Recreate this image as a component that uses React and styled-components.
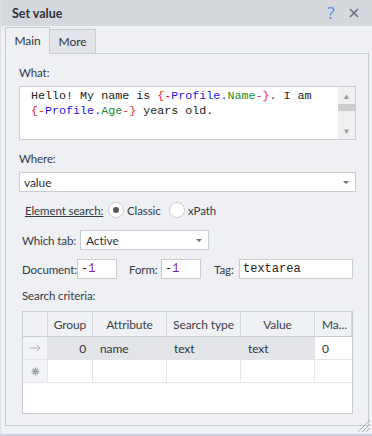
import React from 'react'
import styled, { createGlobalStyle } from 'styled-components'

const Global = createGlobalStyle`
  html, body {
    margin: 0;
    padding: 0;
    background: #eff0f4;
  }
  body {
    font-family: Lato, Roboto, sans-serif;
    font-size: 11.5px;
    letter-spacing: -0.1px;
    color: #333a44;
  }
`

const Window = styled.div`
  width: 372px;
  height: 436px;
  display: flex;
  flex-direction: column;
  background: #eff0f4;
  box-sizing: border-box;
  border-left: 1px solid #dcdfe4;
  border-bottom: 2px solid #d0d3d9;
  position: relative;
  overflow: hidden;
`

const TitleBar = styled.div`
  height: 26px;
  flex: none;
  background: #d5d8dd;
  display: flex;
  align-items: center;
  padding: 0 8px 0 11px;
  box-sizing: border-box;
`

const Title = styled.div`
  font-weight: bold;
  font-size: 12.5px;
  letter-spacing: 0;
  color: #2c313a;
  flex: 1;
`

const HelpButton = styled.span`
  width: 22px;
  text-align: center;
  font-family: "Noto Sans", sans-serif;
  font-size: 17px;
  color: #5b93ee;
  line-height: 20px;
  margin-right: 2px;
`

const CloseIcon = styled.svg`
  margin: 0 4px;
`

const Body = styled.div`
  flex: 1;
  display: flex;
  flex-direction: column;
  padding: 2px 3px 8px 4px;
`

const TabStrip = styled.div`
  display: flex;
  align-items: flex-end;
  height: 26px;
  margin-bottom: -1px;
  position: relative;
  z-index: 1;
`

const Tab = styled.div`
  box-sizing: border-box;
  height: ${p => (p.$active ? '27px' : '25px')};
  width: ${p => (p.$active ? '45px' : '46px')};
  border: 1px solid #c8cbd1;
  border-bottom: ${p => (p.$active ? '1px solid #eff0f4' : '1px solid #c8cbd1')};
  border-left: ${p => (p.$active ? '1px solid #c8cbd1' : 'none')};
  background: ${p => (p.$active ? '#eff0f4' : '#e3e5ea')};
  display: flex;
  align-items: center;
  justify-content: center;
  padding-bottom: ${p => (p.$active ? '1px' : '0')};
  font-size: 12px;
  color: #2f3540;
`

const Panel = styled.div`
  flex: 1;
  border: 1px solid #c8cbd1;
  padding: 11px 12px 10px 13px;
  display: flex;
  flex-direction: column;
`

const Label = styled.div`
  line-height: 16px;
  height: 16px;
  margin-top: ${p => p.$mt || 0}px;
  margin-left: ${p => p.$ml || 0}px;
`

const CodeBox = styled.div`
  margin-top: 5px;
  height: 54px;
  box-sizing: border-box;
  border: 1px solid #c9ccd2;
  background: #fff;
  display: flex;
`

const CodeText = styled.div`
  flex: 1;
  padding: 2px 0 0 11px;
  font-family: "Liberation Mono", "Courier New", monospace;
  font-size: 11.7px;
  letter-spacing: 0;
  line-height: 15px;
  color: #222;
  white-space: pre;
`

const Tok = styled.span`
  color: ${p => p.$c};
`

const ScrollBar = styled.div`
  width: 17px;
  background: #f0f0f0;
  display: flex;
  flex-direction: column;
  align-items: center;
`

const ScrollArrow = styled.div`
  height: 17px;
  width: 17px;
  display: flex;
  align-items: center;
  justify-content: center;
  color: #9a9a9a;
  font-size: 8px;
`

const ScrollThumb = styled.div`
  width: 17px;
  height: 7px;
  background: #cdcdcd;
`

const Spacer = styled.div`
  flex: 1;
`

const Select = styled.div`
  box-sizing: border-box;
  margin-top: ${p => p.$mt || 0}px;
  width: ${p => (p.$w ? `${p.$w}px` : 'auto')};
  height: 20px;
  border: 1px solid #c9ccd2;
  background: #fff;
  display: flex;
  align-items: center;
  padding: 0 6px 0 ${p => p.$pl || 4}px;
  font-size: 12px;
  color: #2f3540;
`

const SelectText = styled.span`
  flex: 1;
`

const Caret = styled.span`
  width: 0;
  height: 0;
  border-left: 3px solid transparent;
  border-right: 3px solid transparent;
  border-top: 3px solid #6a6f78;
`

const Row = styled.div`
  display: flex;
  align-items: center;
  height: 20px;
  margin-top: ${p => p.$mt || 0}px;
  margin-left: ${p => p.$ml || 0}px;
`

const LinkLabel = styled.span`
  text-decoration: underline;
  width: 83px;
  flex: none;
  white-space: nowrap;
`

const Radio = styled.span`
  box-sizing: border-box;
  flex: none;
  width: 16px;
  height: 16px;
  border-radius: 50%;
  border: 1px solid #c9ccd2;
  background: #fff;
  display: inline-flex;
  align-items: center;
  justify-content: center;
  margin-right: 3px;

  &::after {
    content: '';
    width: 6px;
    height: 6px;
    border-radius: 50%;
    background: ${p => (p.$on ? '#50555e' : 'transparent')};
  }
`

const RadioText = styled.span`
  width: ${p => p.$w}px;
  flex: none;
`

const FieldLabel = styled.span`
  width: ${p => p.$w}px;
  flex: none;
  margin-left: ${p => p.$ml || 0}px;
  white-space: nowrap;
`

const Input = styled.div`
  box-sizing: border-box;
  flex: none;
  width: ${p => p.$w}px;
  height: 20px;
  border: 1px solid #c9ccd2;
  background: #fff;
  display: flex;
  align-items: center;
  padding-left: 3px;
  font-family: "Liberation Mono", "Courier New", monospace;
  font-size: 12px;
  letter-spacing: 0;
  color: #222;
`

const Num = styled.span`
  color: #7a1fa0;
`

const Grid = styled.div`
  margin-top: 7px;
  margin-left: 3px;
  width: 331px;
  height: 103px;
  box-sizing: border-box;
  border: 1px solid #c8cbd1;
  background: #fff;
  display: grid;
  grid-template-columns: 25px 45px 74px 74px 74px 1fr;
  grid-template-rows: 25px 23px 23px;
  align-content: start;
  font-size: 12px;
`

const HeadCell = styled.div`
  background: #f0f1f5;
  border-right: 1px solid #d3d6dc;
  border-bottom: 1px solid #c8cbd1;
  display: flex;
  align-items: center;
  justify-content: ${p => (p.$left ? 'flex-start' : 'center')};
  padding-left: ${p => (p.$left ? '7px' : '0')};
  color: #3a404a;
  white-space: nowrap;
  overflow: hidden;
  &:last-child { border-right: none; }
`

const Cell = styled.div`
  background: ${p => (p.$sel ? '#e4e5e9' : '#fff')};
  border-right: 1px solid #e3e5e9;
  border-bottom: 1px solid #e3e5e9;
  display: flex;
  align-items: center;
  justify-content: ${p => (p.$right ? 'flex-end' : 'flex-start')};
  padding: 0 6px 0 7px;
  color: #2f3540;
  ${p => p.$last && 'border-right: none;'}
`

const Indicator = styled.div`
  background: #f3f4f7;
  border-right: 1px solid #e3e5e9;
  border-bottom: 1px solid #e3e5e9;
  display: flex;
  align-items: center;
  justify-content: center;
`

const Grip = styled.svg`
  position: absolute;
  right: 1px;
  bottom: 1px;
`

const App = () => (
  <>
    <Global />
    <Window>
      <TitleBar>
        <Title>Set value</Title>
        <HelpButton>?</HelpButton>
        <CloseIcon width="12" height="12" viewBox="0 0 12 12">
          <path d="M2 2 L10 10 M10 2 L2 10" stroke="#6c727c" strokeWidth="1.6" />
        </CloseIcon>
      </TitleBar>
      <Body>
        <TabStrip>
          <Tab $active>Main</Tab>
          <Tab>More</Tab>
        </TabStrip>
        <Panel>
          <Label>What:</Label>
          <CodeBox>
            <CodeText>
              {'Hello! My name is '}
              <Tok $c="#f0262a">{'{-'}</Tok>
              <Tok $c="#1a1ae6">Profile.</Tok>
              <Tok $c="#1f8a1f">Name</Tok>
              <Tok $c="#f0262a">{'-}'}</Tok>
              {'. I am\n'}
              <Tok $c="#f0262a">{'{-'}</Tok>
              <Tok $c="#1a1ae6">Profile.</Tok>
              <Tok $c="#1f8a1f">Age</Tok>
              <Tok $c="#f0262a">{'-}'}</Tok>
              {' years old.'}
            </CodeText>
            <ScrollBar>
              <ScrollArrow>▲</ScrollArrow>
              <ScrollThumb />
              <Spacer />
              <ScrollArrow>▼</ScrollArrow>
            </ScrollBar>
          </CodeBox>
          <Label $mt={11}>Where:</Label>
          <Select $mt={5}>
            <SelectText>value</SelectText>
            <Caret />
          </Select>
          <Row $mt={8} $ml={6}>
            <LinkLabel>Element search:</LinkLabel>
            <Radio $on />
            <RadioText $w={42}>Classic</RadioText>
            <Radio />
            <RadioText $w={30}>xPath</RadioText>
          </Row>
          <Row $mt={10} $ml={3}>
            <FieldLabel $w={58}>Which tab:</FieldLabel>
            <Select $w={129} $pl={5}>
              <SelectText>Active</SelectText>
              <Caret />
            </Select>
          </Row>
          <Row $mt={9} $ml={3}>
            <FieldLabel $w={55}>Document:</FieldLabel>
            <Input $w={40}>-<Num>1</Num></Input>
            <FieldLabel $w={32} $ml={12}>Form:</FieldLabel>
            <Input $w={40}>-<Num>1</Num></Input>
            <FieldLabel $w={25} $ml={13}>Tag:</FieldLabel>
            <Input $w={114}>textarea</Input>
          </Row>
          <Label $mt={9} $ml={3}>Search criteria:</Label>
          <Grid>
            <HeadCell />
            <HeadCell>Group</HeadCell>
            <HeadCell>Attribute</HeadCell>
            <HeadCell>Search type</HeadCell>
            <HeadCell>Value</HeadCell>
            <HeadCell $left>Ma...</HeadCell>

            <Indicator>
              <svg width="12" height="8" viewBox="0 0 12 8">
                <path d="M0.5 4 H11 M7.5 0.8 L11 4 L7.5 7.2" fill="none" stroke="#b4b8bf" strokeWidth="1" />
              </svg>
            </Indicator>
            <Cell $sel $right>0</Cell>
            <Cell $sel>name</Cell>
            <Cell $sel>text</Cell>
            <Cell $sel>text</Cell>
            <Cell $last>0</Cell>

            <Indicator>
              <svg width="9" height="9" viewBox="0 0 9 9">
                <g stroke="#9ea2a9" strokeWidth="1.3">
                  <path d="M4.5 0.5 V8.5 M0.5 4.5 H8.5 M1.7 1.7 L7.3 7.3 M7.3 1.7 L1.7 7.3" />
                </g>
              </svg>
            </Indicator>
            <Cell />
            <Cell />
            <Cell />
            <Cell />
            <Cell $last />
          </Grid>
        </Panel>
      </Body>
      <Grip width="16" height="16" viewBox="0 0 16 16">
        <g stroke="#a9adb4" strokeWidth="1">
          <line x1="15" y1="3" x2="3" y2="15" />
          <line x1="15" y1="7" x2="7" y2="15" />
          <line x1="15" y1="11" x2="11" y2="15" />
        </g>
      </Grip>
    </Window>
  </>
)

export default App
